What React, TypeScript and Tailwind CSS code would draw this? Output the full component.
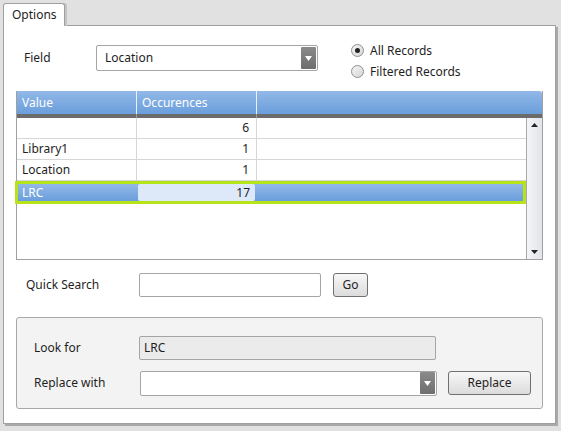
import React from "react";

const font = { fontFamily: '"Noto Sans", "Open Sans", sans-serif' };

const rows = [
  { value: "", count: 6 },
  { value: "Library1", count: 1 },
  { value: "Location", count: 1 },
];

function DropArrow() {
  return (
    <div className="w-[15px] h-[22px] my-auto mr-[1px] bg-gradient-to-b from-[#8a8a8a] to-[#6e6e6e] rounded-[1px] flex items-center justify-center">
      <svg width="7" height="5" viewBox="0 0 7 5">
        <path d="M0 0 H7 L3.5 5 Z" fill="#fff" />
      </svg>
    </div>
  );
}

function Radio({ checked, label }: { checked?: boolean; label: string }) {
  return (
    <div className="flex items-center gap-[6px] h-[21px]">
      <div className="w-[13px] h-[13px] rounded-full border border-[#8e8f8f] bg-gradient-to-br from-[#f4f4f4] to-[#d6d6d6] flex items-center justify-center">
        {checked && <div className="w-[5px] h-[5px] rounded-full bg-[#222]" />}
      </div>
      <span>{label}</span>
    </div>
  );
}

function Button({ label, w }: { label: string; w: string }) {
  return (
    <div className={`${w} h-[24px] rounded-[3px] border border-[#707070] bg-gradient-to-b from-[#f7f7f7] to-[#dcdcdc] flex items-center justify-center`}>
      {label}
    </div>
  );
}

export default function App() {
  return (
    <div className="w-[561px] h-[431px] bg-[#e1e1e1] text-[12px] text-[#1e1e1e] pt-[3px] pl-[3px]" style={font}>
      <div className="flex">
        <div className="h-[23px] w-[62px] bg-white border border-b-0 border-[#a0a0a0] rounded-t-[3px] flex items-center pl-[8px] shadow-[2px_0_0_#c4c4c4] relative z-10">
          Options
        </div>
      </div>
      <div className="w-[553px] h-[399px] -mt-[1px] bg-white border border-[#a0a0a0] shadow-[2px_2px_0_#a9a9a9] flex flex-col">
        <div className="flex items-start h-[26px] mt-[19px] pl-[20px]">
          <div className="w-[72px] h-[26px] flex items-center">Field</div>
          <div className="w-[222px] h-[26px] border border-[#a5a5a5] rounded-[2px] flex items-center pl-[8px] justify-between">
            <span>Location</span>
            <DropArrow />
          </div>
          <div className="ml-[33px] -mt-[5px] flex flex-col">
            <Radio checked label="All Records" />
            <Radio label="Filtered Records" />
          </div>
        </div>

        <div className="mt-[20px] ml-[12px] w-[527px] h-[169px] border border-[#a0a0a0] border-t-0 flex flex-col">
          <div className="flex h-[23px] bg-gradient-to-b from-[#92b8e7] to-[#6a9edb] text-white rounded-tr-[3px]">
            <div className="w-[120px] pl-[5px] flex items-center border-r border-[#e9f0fa]">Value</div>
            <div className="w-[120px] pl-[5px] flex items-center border-r border-[#e9f0fa]">Occurences</div>
            <div className="flex-1" />
          </div>
          <div className="h-[4px] bg-[#6b6b6b] flex">
            <div className="w-[120px] border-r border-[#9a9a9a]" />
            <div className="w-[120px] border-r border-[#9a9a9a]" />
          </div>
          <div className="flex flex-1">
            <div className="flex-1 flex flex-col">
              {rows.map((r, i) => (
                <div key={i} className="flex h-[21px] border-b border-[#d6d6d6]">
                  <div className="w-[120px] pl-[5px] flex items-center border-r border-[#d6d6d6]">{r.value}</div>
                  <div className="w-[120px] pr-[7px] flex items-center justify-end border-r border-[#d6d6d6]">{r.count}</div>
                  <div className="flex-1" />
                </div>
              ))}
              <div className="flex h-[23px] -ml-[2px] border-[3px] border-[#b6e31a] bg-gradient-to-b from-[#92b8e7] to-[#6a9edb] text-white">
                <div className="w-[120px] pl-[4px] flex items-center">LRC</div>
                <div className="w-[117px] pr-[5px] rounded-[2px] bg-[#dde9f8] text-[#1e1e1e] flex items-center justify-end">17</div>
                <div className="flex-1" />
              </div>
            </div>
            <div className="w-[16px] border-l border-[#a9a9a9] bg-gradient-to-r from-[#f4f5f7] to-[#e1e4ea] flex flex-col justify-between items-center py-[5px]">
              <svg width="7" height="4" viewBox="0 0 7 4">
                <path d="M0 4 H7 L3.5 0 Z" fill="#222" />
              </svg>
              <svg width="7" height="4" viewBox="0 0 7 4">
                <path d="M0 0 H7 L3.5 4 Z" fill="#222" />
              </svg>
            </div>
          </div>
        </div>

        <div className="flex items-center mt-[13px] ml-[22px]">
          <div className="w-[113px]">Quick Search</div>
          <div className="w-[182px] h-[24px] border border-[#a5a5a5] rounded-[2px]" />
          <div className="ml-[12px]">
            <Button label="Go" w="w-[35px]" />
          </div>
        </div>

        <div className="mt-[20px] ml-[12px] w-[527px] h-[92px] bg-[#f3f3f3] border border-[#a8a8a8] rounded-[3px] flex flex-col pt-[18px] pl-[17px]">
          <div className="flex items-center h-[24px]">
            <div className="w-[105px]">Look for</div>
            <div className="w-[297px] h-[24px] bg-[#ebebeb] border border-[#a5a5a5] rounded-[2px] flex items-center pl-[4px]">LRC</div>
          </div>
          <div className="flex items-center h-[24px] mt-[11px]">
            <div className="w-[106px]">Replace with</div>
            <div className="w-[297px] h-[25px] bg-white border border-[#a5a5a5] rounded-[2px] flex justify-end">
              <DropArrow />
            </div>
            <div className="ml-[11px]">
              <Button label="Replace" w="w-[83px]" />
            </div>
          </div>
        </div>
      </div>
    </div>
  );
}
